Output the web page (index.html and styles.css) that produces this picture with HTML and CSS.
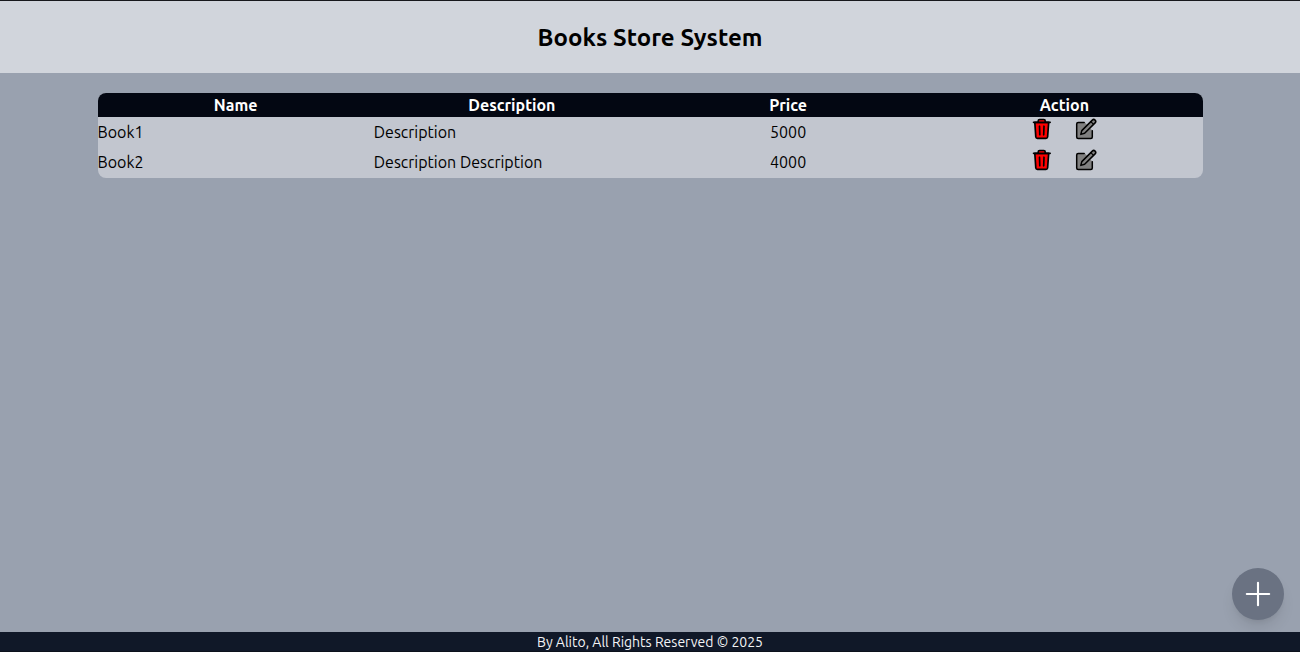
FILE: index.html
```html
<!DOCTYPE html>
<html lang="en">
<head>
<meta charset="utf-8">
<title>Books Store System</title>
<link rel="stylesheet" href="styles.css">
</head>
<body>
<svg class="defs" aria-hidden="true">
  <symbol id="trash" viewBox="0 0 24 24">
    <path d="M4.8 5.3 5.8 20Q6 21.4 7.4 21.4h8.6q1.4 0 1.6-1.4L18.7 5.3z" fill="#f00" stroke="#000" stroke-width="1.7" stroke-linejoin="round"/>
    <path d="M8.2 5V3.9q0-1.4 1.4-1.4h4.2q1.4 0 1.4 1.4V5" fill="#f00" stroke="#000" stroke-width="1.7"/>
    <path d="M3.5 5.3H20.2M9.5 9.2l.3 8.6M14 9.2l-.3 8.6" fill="none" stroke="#000" stroke-width="1.65" stroke-linecap="round"/>
  </symbol>
  <symbol id="edit" viewBox="0 0 24 24">
    <path d="M10.4 5.5H4.2Q2.7 5.5 2.7 7v12.9q0 1.5 1.5 1.5h12.6q1.5 0 1.5-1.5v-6.4L11 5.5z" fill="#808080"/>
    <path d="M10.2 5.5H4.2Q2.7 5.5 2.7 7v12.9q0 1.5 1.5 1.5h12.6q1.5 0 1.5-1.5v-6.2" fill="none" stroke="#000" stroke-width="1.5" stroke-linecap="round"/>
    <path d="m6.8 17.4 1-3.8L18.3 3.1a1.95 1.95 0 0 1 2.8 2.8L10.6 16.3z" fill="#808080" stroke="#000" stroke-width="1.5" stroke-linejoin="round"/>
    <path d="m16.8 4.6 2.8 2.8" stroke="#000" stroke-width="1.3"/>
  </symbol>
</svg>
<header class="header"><h1 class="title">Books Store System</h1></header>
<main class="main">
  <table class="books">
    <thead>
      <tr><th>Name</th><th>Description</th><th>Price</th><th>Action</th></tr>
    </thead>
    <tbody>
      <tr><td>Book1</td><td>Description</td><td class="price">5000</td><td class="action-cell"><div class="actions"><svg class="icon"><use href="#trash"/></svg><svg class="icon"><use href="#edit"/></svg></div></td></tr>
      <tr><td>Book2</td><td>Description Description</td><td class="price">4000</td><td class="action-cell"><div class="actions"><svg class="icon"><use href="#trash"/></svg><svg class="icon"><use href="#edit"/></svg></div></td></tr>
    </tbody>
  </table>
</main>
<button class="add" aria-label="Add book"><svg class="plus" viewBox="0 0 26 26"><path d="M13 1.8v22.4M1.8 13h22.4"/></svg></button>
<footer class="footer">By Alito, All Rights Reserved © 2025</footer>
</body>
</html>
```
FILE: styles.css
```css
* { box-sizing: border-box; }
body {
  margin: 0;
  height: 652px;
  display: flex;
  flex-direction: column;
  overflow: hidden;
  background: #99a1af;
  color: #000;
  font: 16px/24px Ubuntu, "Noto Sans", sans-serif;
}
.defs { position: absolute; width: 0; height: 0; }
.header {
  height: 73px;
  padding-top: 1px;
  border-top: 1px solid #17181c;
  background: #d1d5dc;
  display: flex;
  align-items: center;
  justify-content: center;
}
.title { margin: 0; font-size: 24px; line-height: 32px; font-weight: 600; letter-spacing: 0.04px; }
.main { flex: 1; padding-top: 20px; display: flex; justify-content: center; align-items: flex-start; }
.books {
  width: 85%;
  table-layout: fixed;
  border-collapse: collapse;
  border-radius: 8px;
  overflow: hidden;
  background: #c2c6cf;
}
.books th { padding: 0; height: 24px; background: #030712; color: #fff; font-weight: 600; text-align: center; }
.books td { padding: 2.75px 0 0; height: 30.5px; vertical-align: top; }
.books .action-cell { padding: 0; }
.books .price { text-align: center; }
.actions { display: flex; justify-content: center; gap: 20px; height: 30.5px; }
.icon { width: 24px; height: 24px; }
.add {
  position: absolute;
  right: 16px;
  bottom: 32px;
  width: 52px;
  height: 52px;
  padding: 0;
  border: 0;
  border-radius: 50%;
  background: #6a7282;
  box-shadow: 0 10px 15px -3px rgba(0,0,0,.1), 0 4px 6px -4px rgba(0,0,0,.1);
  display: grid;
  place-items: center;
}
.plus { width: 26px; height: 26px; fill: none; stroke: #fff; stroke-width: 2.1; stroke-linecap: round; }
.footer {
  position: relative;
  z-index: 1;
  height: 20px;
  background: #101828;
  border-bottom: 1px solid #0c111c;
  color: #f3f4f6;
  font-size: 14px;
  line-height: 20px;
  text-align: center;
}
```
